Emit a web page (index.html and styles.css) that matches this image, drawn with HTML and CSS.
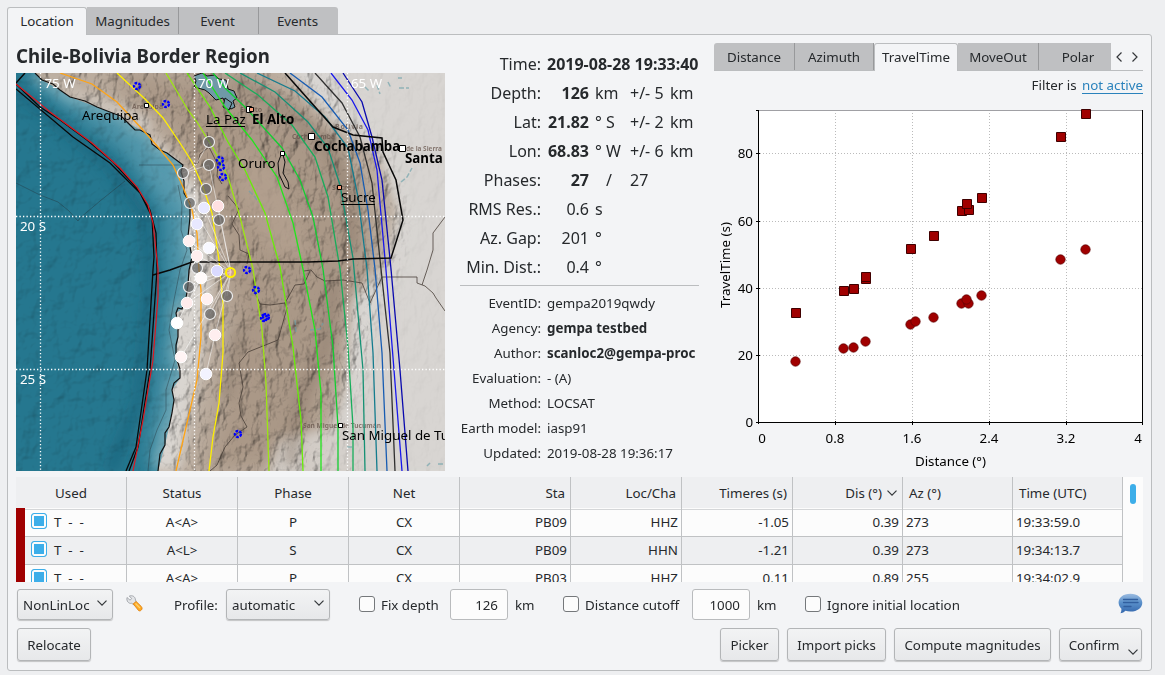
FILE: index.html
```html
<!DOCTYPE html>
<html lang="en">
<head>
<meta charset="utf-8">
<title>Origin locator</title>
<link rel="stylesheet" href="styles.css">
</head>
<body>
<main class="window">
<nav class="tabs main-tabs"><span class="tab t-location active">Location</span><span class="tab t-mag">Magnitudes</span><span class="tab t-event">Event</span><span class="tab t-events">Events</span></nav>
<section class="panel">
<div class="top">
<div class="map-col">
<h1 class="region">Chile-Bolivia Border Region</h1>
<svg class="map" viewBox="16 73 429 398">
<defs>
<filter id="relief" x="0" y="0" width="100%" height="100%">
<feTurbulence type="fractalNoise" baseFrequency="0.09 0.05" numOctaves="6" seed="8"/>
<feColorMatrix type="matrix" values="0 0 0 0 0  0 0 0 0 0  0 0 0 0 0  1 0 0 0 0"/>
<feDiffuseLighting surfaceScale="6" diffuseConstant="1.15" lighting-color="#fff"><feDistantLight azimuth="225" elevation="61"/></feDiffuseLighting>
</filter>
<filter id="seabed" x="0" y="0" width="100%" height="100%">
<feTurbulence type="fractalNoise" baseFrequency="0.06" numOctaves="3" seed="3"/>
<feColorMatrix type="matrix" values="0 0 0 0 0  0 0 0 0 0  0 0 0 0 0  1 0 0 0 0"/>
<feDiffuseLighting surfaceScale="4" diffuseConstant="1.15" lighting-color="#fff"><feDistantLight azimuth="225" elevation="60"/></feDiffuseLighting>
</filter>
<filter id="b6" x="-40%" y="-40%" width="180%" height="180%"><feGaussianBlur stdDeviation="6"/></filter>
<filter id="b12" x="-40%" y="-40%" width="180%" height="180%"><feGaussianBlur stdDeviation="11"/></filter>
<path id="coast" d="M35 73L42 80L53 84L60 90L70 97L85 101L97 107L115 114L121 116L127 122L135 130L140 130L144 132L150 135L152 144L160 150L167 153L183 165L181 172L184 181L184 193L190 203L190 217L188 237L192 257L189 270L188 285L186 298L182 309L178 308L176 313L178 325L178 337L176 345L176 357L180 369L180 378L174 383L172 390L174 400L172 413L169 427L165 433L165 445L160 454L158 471"/>
<clipPath id="land"><path d="M35 73L42 80L60 90L70 97L97 107L115 114L127 122L140 130L150 135L152 144L167 153L183 165L181 172L184 193L190 203L190 217L188 237L192 257L189 270L186 298L182 309L176 313L178 337L176 357L180 378L172 390L174 400L169 427L165 445L158 471H445V73Z"/></clipPath>
<g id="quake" fill="none" stroke="#00f"><circle r="3" stroke-width="2.4" stroke-dasharray="2.6 1.2"/></g>
</defs>
<rect x="16" y="73" width="429" height="398" fill="#25778f"/>
<path d="M35 73L97 107L150 140L186 170L192 257L178 320L165 445L155 471H148L155 400L170 280L168 215L125 150L25 75Z" fill="#5a9db1" filter="url(#b12)"/>
<use href="#coast" fill="none" stroke="#8ab8c3" stroke-width="9" filter="url(#b6)"/>
<path d="M16 90L110 165L145 215L150 280L140 400L110 471" fill="none" stroke="#175c75" stroke-width="12" opacity=".5" filter="url(#b6)"/>
<rect x="16" y="73" width="190" height="398" filter="url(#seabed)" class="shade sea"/>
<g clip-path="url(#land)">
<rect x="16" y="73" width="429" height="398" fill="#bbad9f"/>
<path d="M100 73H230L300 110L345 150L372 220L360 300L330 380L308 471H205L235 340L220 220L170 130Z" fill="#aa9887" filter="url(#b12)"/>
<path d="M30 73L150 133L200 190L214 255L203 350L180 471H150V120Z" fill="#d9d5d0" filter="url(#b6)"/>
<path d="M278 60H460V480H320L345 390L352 300L385 265L398 210L378 155L330 120Z" fill="#d8d5d2" filter="url(#b6)"/>
<path d="M280 440L315 430L365 430V480H265Z" fill="#d2ccc6" filter="url(#b6)"/>
<path d="M235 80L290 110L330 150L350 195L352 250M335 280L325 350L300 400L290 465M225 400L240 330" fill="none" stroke="#8b7a6c" stroke-width="12" opacity=".55" filter="url(#b6)"/>
<rect x="16" y="73" width="429" height="398" filter="url(#relief)" class="shade"/>
<path d="M240 145L280 175L310 255L265 250L237 190Z" fill="#b3a08f" opacity=".8" filter="url(#b6)"/>
<path d="M324 60H460V480H365L374 330L398 265L408 220L388 145L350 115Z" fill="#d8d5d2" opacity=".92" filter="url(#b6)"/>
<path d="M318 471L330 438L372 350L378 300L392 300V471Z" fill="#d6d2ce" opacity=".7" filter="url(#b6)"/>
</g>
<g fill="none" stroke="#24323a" stroke-width=".7" opacity=".6">
<path d="M16 183L40 195L58 202L69 211L78 221L80 218L100 201L125 181M139 165H183M178 185L182 205L181 230L187 250L180 270L174 300L169 330L175 360L166 390L166 410L157 430L150 450L148 471"/>
</g>
<g fill="none" stroke="#403730" stroke-width="1" opacity=".75">
<path d="M192 165L198 163L200 154L209 147L207 132M209 147L218 165L217 176L222 184M228 196L239 209L232 224L239 235L240 250L249 254L247 264M304 271L311 270L317 277L325 281L343 280L362 283L370 303L376 290L382 277H417V283L425 286L433 293L436 298L445 311M422 285L427 270L433 250V233L445 217M310 271L304 284L295 285L285 303L287 308L278 340L248 352L239 363L243 387L239 403L241 416L247 427L235 435L225 447L217 465L210 471M254 290L260 304L270 305L285 303"/>
</g>
<use href="#coast" fill="none" stroke="#111" stroke-width="1.2"/>
<g fill="#7099a7" stroke="#111" stroke-width="1">
<path d="M202 73L207 76L215 75L219 79L226 80L228 89L234 91L237 98L233 101L235 107L231 109L226 105L223 98L216 100L209 93L205 90L194 87L196 81L194 76Z"/>
<path d="M225 98L232 103L229 110L223 107Z"/><path d="M281 155L278 163L279 174L285 187L289 189L288 182L283 173L285 162L283 155Z" fill="#ad9b8b"/>
</g>
<g fill="none" stroke="#6ba1ab" stroke-width="1.5" opacity=".65"><path d="M249 191L255 197L258 202M295 320L296 333M310 330L320 329L323 323M365 87L370 92M377 85L380 94M388 82L391 88M399 88H409M398 78H402M427 466L430 463M438 464H444M401 182L407 177L412 168M347 447H352" stroke-dasharray="5 2"/></g>
<g font-family="Noto Sans" font-weight="700" font-size="7" fill="#66544b" opacity=".72">
<text x="132" y="109" textLength="31" lengthAdjust="spacingAndGlyphs">Arequipa</text><text x="240" y="112">El Alto</text><text x="292" y="139" textLength="43" lengthAdjust="spacingAndGlyphs">Cochabamba</text><text x="335" y="129" textLength="28">Bolivia</text><text x="406" y="151" textLength="36" lengthAdjust="spacingAndGlyphs">de la Sierra</text><text x="332" y="190">Sucre</text><text x="303" y="428" textLength="78" lengthAdjust="spacingAndGlyphs">San Miguel de Tucumán</text></g>
<g fill="none" stroke-width="1.3">
<path stroke="#ffa414" d="M60 73L92 84L117 102L143 130L158 147L173 165L183 187L192 210L197 233L199 270L201 290L201 337L197 380L187 423L176 471"/>
<path stroke="#fff000" d="M117 73L145 99L163 118L180 143L192 162L203 187L212 213L219 260L223 303L223 353L219 403L213 437L209 471"/>
<path stroke="#9be613" d="M166 73L188 110L197 122L213 148L228 177L240 217L253 269L262 330L266 383L269 471"/>
<path stroke="#68ee08" d="M187 73L210 107L228 142L245 170L265 213L280 267L293 347L301 420L303 471"/>
<path stroke="#20e61c" d="M203 73L225 107L252 140L277 177L293 223L303 269L315 330L321 393L321 471"/>
<path stroke="#13ce32" d="M213 73L225 88L245 107L282 148L300 180L313 217L323 269L333 347L338 427L338 471"/>
<path stroke="#17ad5b" d="M225 73L258 95L292 125L315 157L328 197L340 269L348 347L353 427V471"/>
<path stroke="#159174" d="M240 73L275 92L308 122L328 148L340 185L353 258L363 370L365 471"/>
<path stroke="#147c8e" d="M257 73L295 91L325 117L348 148L358 197L367 269L373 353L377 471"/>
<path stroke="#175cb2" d="M290 73L322 97L348 130L360 163L368 210L375 269L382 353L387 471"/>
<path stroke="#303030" d="M315 73L342 103L360 137L372 183L381 269L390 353L395 471"/>
<path stroke="#1717ed" d="M331 73L352 100L368 130L377 170L386 270L394 370L402 471"/>
<path stroke="#0909ae" d="M343 73L362 102L372 137L382 180L391 269L400 370L408 471"/>
</g>
<g fill="none" stroke="#080808" stroke-width="1.5">
<path d="M16 83L25 73M285 73L333 127L353 135L382 138L383 152L396 180L403 220L391 258L353 259L338 261L308 262H192L170 270L153 275"/>
<path d="M16 84L40 107L60 120L87 140L113 162L137 188L150 210L156 233L157 270L150 370L138 447L129 471M16 89L73 137L110 163L140 193L152 217L154 257L153 270L147 370L136 447L126 471" stroke-width="1.3"/>
</g>
<path d="M16 84L50 112L92 143L120 168L137 187L148 205L153 223L158 269V297L153 360L143 420L133 471" fill="none" stroke="#df1820" stroke-width="1.2"/>
<g stroke="#fff" stroke-opacity=".5" stroke-width="1" fill="none"><path d="M231 272L209 165L183 173L196 165L209 142M231 272L190 203M231 272L204 208M231 272L189 241M231 272L197 256M231 272L201 278L177 323M231 272L187 303M231 272L181 357M231 272L215 335L206 374M231 272L210 314M231 272L218 206M231 272L189 287M231 272L227 296"/></g>
<g stroke="#fff" stroke-width="1.3" stroke-dasharray="1.3 2.2" fill="none"><path d="M40.5 73V471M194.5 73V471M347.5 73V471M16 216.5H445M16 369.5H445"/></g>
<use href="#quake" x="137" y="86"/><use href="#quake" x="166" y="104"/><use href="#quake" x="220" y="160"/><use href="#quake" x="221" y="167"/><use href="#quake" x="223" y="177"/><use href="#quake" x="247" y="270"/><use href="#quake" x="256" y="290"/><use href="#quake" x="264" y="318"/><use href="#quake" x="266" y="317"/><use href="#quake" x="238" y="434"/>
<g fill="#606060" fill-opacity=".7" stroke="#eee" stroke-width="1.2"><circle cx="209" cy="142" r="5.5"/><circle cx="209" cy="165" r="5.5"/><circle cx="183" cy="173" r="5.5"/><circle cx="206" cy="189" r="5.5"/><circle cx="190" cy="203" r="5.5"/><circle cx="219" cy="220" r="5.5"/><circle cx="197" cy="268" r="5.5"/><circle cx="189" cy="287" r="5.5"/><circle cx="227" cy="296" r="5.5"/><circle cx="210" cy="314" r="5.5"/></g>
<g stroke="#fff"><circle cx="204" cy="208" r="5.8" fill="#e8e8ff"/><circle cx="218" cy="206" r="5.8" fill="#ffe0e2"/><circle cx="197" cy="224" r="5.8" fill="#e8e8ff"/><circle cx="189" cy="241" r="5.8" fill="#fff0f0"/><circle cx="209" cy="248" r="5.8" fill="#f8f8ff"/><circle cx="197" cy="256" r="5.8" fill="#ffeeee"/><circle cx="217" cy="271" r="5.8" fill="#dadaff"/><circle cx="201" cy="278" r="5.8" fill="#fffafa"/><circle cx="207" cy="299" r="5.8" fill="#fff0f0"/><circle cx="187" cy="303" r="5.8" fill="#ffecec"/><circle cx="177" cy="323" r="5.8" fill="#fff"/><circle cx="215" cy="335" r="5.8" fill="#ffeeef"/><circle cx="181" cy="357" r="5.8" fill="#fff4f4"/><circle cx="206" cy="374" r="5.8" fill="#f3f3ff"/></g>
<circle cx="230.500" cy="272.500" r="4.600" fill="#eda58a" fill-opacity=".5" stroke="#fff200" stroke-width="2"/>
<g stroke="#000" fill="#fff" stroke-width="1"><path d="M144.500 103.500h4v4h-4zM246.500 106.500h5v6h-5zM280.500 151.500h4v4h-4zM308.500 133.500h6v6h-6zM399.500 145.500h6v6h-6zM338.500 423.500h4v4h-4z"/><path fill="#ffa27e" d="M249.500 107.500h4v4h-4zM337.500 185.500h4v4h-4z"/></g>
<g class="geo-label" fill="#fff"><text x="44.500" y="88">75 W</text><text x="198" y="88">70 W</text><text x="351" y="88">65 W</text><text x="20" y="231">20 S</text><text x="20" y="384">25 S</text></g>
<g class="geo-label"><text x="82" y="120">Arequipa</text><text x="206" y="124">La Paz</text><text x="238" y="168">Oruro</text><text x="341" y="202">Sucre</text><text x="342" y="440">San Miguel de Tucuman</text><g font-weight="700"><text x="252" y="124">El Alto</text><text x="314" y="151">Cochabamba</text><text x="405" y="163">Santa</text></g><path d="M206 126.500H245M341 204.500H375" stroke="#000"/></g>
</svg>
</div>
<div class="info">
<dl class="summary">
<dt>Time:</dt><dd class="wide"><b>2019-08-28 19:33:40</b></dd>
<dt>Depth:</dt><dd class="num"><b>126</b></dd><dd>km</dd><dd>+/- 5</dd><dd>km</dd>
<dt>Lat:</dt><dd class="num"><b>21.82</b></dd><dd>° S</dd><dd>+/- 2</dd><dd>km</dd>
<dt>Lon:</dt><dd class="num"><b>68.83</b></dd><dd>° W</dd><dd>+/- 6</dd><dd>km</dd>
<dt>Phases:</dt><dd class="num"><b>27</b></dd><dd class="slash">/</dd><dd>27</dd><dd></dd>
<dt>RMS Res.:</dt><dd class="num">0.6</dd><dd>s</dd><dd></dd><dd></dd>
<dt>Az. Gap:</dt><dd class="num">201</dd><dd>°</dd><dd></dd><dd></dd>
<dt>Min. Dist.:</dt><dd class="num">0.4</dd><dd>°</dd><dd></dd><dd></dd>
</dl>
<hr class="rule">
<dl class="meta">
<dt>EventID:</dt><dd>gempa2019qwdy</dd>
<dt>Agency:</dt><dd><b>gempa testbed</b></dd>
<dt>Author:</dt><dd><b>scanloc2@gempa-proc</b></dd>
<dt>Evaluation:</dt><dd>- (A)</dd>
<dt>Method:</dt><dd>LOCSAT</dd>
<dt>Earth model:</dt><dd>iasp91</dd>
<dt>Updated:</dt><dd>2019-08-28 19:36:17</dd>
</dl>
</div>
<div class="plot-col">
<nav class="tabs plot-tabs"><span class="tab p1">Distance</span><span class="tab p2">Azimuth</span><span class="tab p3 active">TravelTime</span><span class="tab p4">MoveOut</span><span class="tab p5">Polar</span><svg class="arrows" viewBox="0 0 32 28"><path d="M10.500 9.500L6 14L10.500 18.500M21.500 9.500L26 14L21.500 18.500"/></svg></nav>
<p class="filter">Filter is <a class="link">not active</a></p>
<svg class="plot" viewBox="714 100 430 371">
<rect x="758" y="110" width="385" height="313" fill="#fff"/>
<path d="M835.500 113V422M912.500 113V422M989.500 113V422M1066.500 113V422M760 153.500H1142M760 221.500H1142M760 288.500H1142M760 355.500H1142" stroke="#bbb" stroke-dasharray="1 2" fill="none"/>
<path d="M759 110.500H1142" stroke="#a0a0a4"/>
<path d="M758.500 110V424M1142.500 110V425M756 422.500H1143M756 110.500H759M756 153.500H760M756 221.500H760M756 288.500H760M756 355.500H760M835.500 421V425M912.500 421V425M989.500 421V425M1066.500 421V425" stroke="#000" fill="none"/>
<g fill="#a00000" stroke="#400000">
<path d="M1081.500 109.500h9v9h-9z"/><path d="M1056.500 132.500h9v9h-9z"/><path d="M977.500 193.500h9v9h-9z"/><path d="M957.500 206.500h9v9h-9z"/><path d="M964.500 205.500h9v9h-9z"/><path d="M962.500 199.500h9v9h-9z"/><path d="M929.500 231.500h9v9h-9z"/><path d="M906.500 244.500h9v9h-9z"/><path d="M861.500 274.500h9v9h-9z"/><path d="M861.500 272.500h9v9h-9z"/><path d="M849.500 284.500h9v9h-9z"/><path d="M839.500 286.500h9v9h-9z"/><path d="M791.500 308.500h9v9h-9z"/>
</g>
<g fill="#a00000" stroke="#5a0000" stroke-width=".7"><circle cx="1060.500" cy="259.500" r="4.700"/><circle cx="1085.500" cy="249.500" r="4.700"/><circle cx="981.500" cy="295.500" r="4.700"/><circle cx="961.500" cy="303.500" r="4.700"/><circle cx="968.500" cy="303.500" r="4.700"/><circle cx="966.500" cy="299.500" r="4.700"/><circle cx="933.500" cy="317.500" r="4.700"/><circle cx="910.500" cy="324.500" r="4.700"/><circle cx="915.500" cy="321.500" r="4.700"/><circle cx="865.500" cy="341.500" r="4.700"/><circle cx="853.500" cy="347.500" r="4.700"/><circle cx="843.500" cy="348.500" r="4.700"/><circle cx="795.500" cy="361.500" r="4.700"/></g>
<g class="axis"><g text-anchor="end"><text x="753" y="158">80</text><text x="753" y="226">60</text><text x="753" y="293">40</text><text x="753" y="360">20</text><text x="753" y="427">0</text></g><g text-anchor="middle"><text x="762" y="443">0</text><text x="835" y="443">0.8</text><text x="912" y="443">1.6</text><text x="989" y="443">2.4</text><text x="1066" y="443">3.2</text><text x="1138" y="443">4</text><text x="950.500" y="466">Distance (°)</text><text transform="translate(729.500 265) rotate(-90)">TravelTime (s)</text></g></g>
</svg>
</div>
</div>
<div class="table">
<div class="row head"><span class="c">Used</span><span class="c">Status</span><span class="c">Phase</span><span class="c">Net</span><span class="r">Sta</span><span class="r">Loc/Cha</span><span class="r">Timeres (s)</span><span class="r sort">Dis (°)<svg class="chev" viewBox="0 0 10 6"><path d="M.5 .7L5 5.200L9.500 .7"/></svg></span><span>Az (°)</span><span>Time (UTC)</span></div>
<div class="row"><span class="used"><i class="check on"></i>T&nbsp; -&nbsp; -</span><span class="c">A&lt;A&gt;</span><span class="c">P</span><span class="c">CX</span><span class="r">PB09</span><span class="r">HHZ</span><span class="r">-1.05</span><span class="r">0.39</span><span>273</span><span>19:33:59.0</span></div>
<div class="row alt"><span class="used"><i class="check on"></i>T&nbsp; -&nbsp; -</span><span class="c">A&lt;L&gt;</span><span class="c">S</span><span class="c">CX</span><span class="r">PB09</span><span class="r">HHN</span><span class="r">-1.21</span><span class="r">0.39</span><span>273</span><span>19:34:13.7</span></div>
<div class="row"><span class="used"><i class="check on"></i>T&nbsp; -&nbsp; -</span><span class="c">A&lt;A&gt;</span><span class="c">P</span><span class="c">CX</span><span class="r">PB03</span><span class="r">HHZ</span><span class="r">0.11</span><span class="r">0.89</span><span>255</span><span>19:34:02.9</span></div>
<i class="scroll"></i>
</div>
<div class="controls">
<span class="btn combo locator">NonLinLoc<svg class="chev" viewBox="0 0 10 6"><path d="M.5 .7L5 5.200L9.500 .7"/></svg></span>
<svg class="wrench" viewBox="0 0 17 17"><path d="M1 2.500L4 5.200L5.700 3.600L3.300 1C6 .1 9.200 1.200 9.500 5L10.500 8L8 10L5.600 8.300C2.700 9 .2 6 1 2.500Z" fill="#e3e5e8" stroke="#9599a0" stroke-width=".8"/><path d="M7.200 8.800L10.200 6.500L15.300 11.500C17.500 14 14.300 17 12.500 15.500Z" fill="#ffab25" stroke="#db7b0b" stroke-width=".8"/><path d="M9.500 8.500L14 13" stroke="#ffd36e" stroke-width="1.200"/></svg>
<span class="profile">Profile:</span>
<span class="btn combo auto">automatic<svg class="chev" viewBox="0 0 10 6"><path d="M.5 .7L5 5.200L9.500 .7"/></svg></span>
<label class="opt depth"><i class="check"></i>Fix depth</label><span class="field">126</span><span class="unit">km</span>
<label class="opt cutoff"><i class="check"></i>Distance cutoff</label><span class="field">1000</span><span class="unit">km</span>
<label class="opt ignore"><i class="check"></i>Ignore initial location</label>
<svg class="comment" viewBox="0 0 25 21"><defs><linearGradient id="bubble" x2="0" y2="1"><stop stop-color="#9bbbe0"/><stop offset=".45" stop-color="#5b91cb"/><stop offset="1" stop-color="#3467ad"/></linearGradient></defs><path d="M12.500 .7C19.500 .7 24.300 4.700 24.300 9.700C24.300 14.700 19.500 18.500 12.500 18.500Q9.500 18.500 7.500 17.800Q5.500 20 2.500 20.200Q3.600 18 3.400 15.700C-2.500 10 1 .7 12.500 .7Z" fill="url(#bubble)"/><path d="M5.500 6.500H19.500M5.500 9.500H20M6 13.500H13" stroke="#315f9f" stroke-width="1.300" stroke-linecap="round"/></svg>
</div>
<div class="actions"><span class="btn b-reloc">Relocate</span><span class="btn b-picker">Picker</span><span class="btn b-import">Import picks</span><span class="btn b-mag">Compute magnitudes</span><span class="btn b-confirm">Confirm<svg class="chev" viewBox="0 0 10 6"><path d="M.5 .7L5 5.200L9.500 .7"/></svg></span></div>
</section>
</main>
</body>
</html>
```
FILE: styles.css
```css
* { box-sizing: border-box; }
body { margin: 0; background: #eeeff1; color: #26292c; font: 13.33px/18px "Noto Sans", sans-serif; }
.window { width: 1165px; height: 675px; padding: 7px 13px 4px 7px; display: flex; flex-direction: column; overflow: hidden; }
.tabs { display: flex; height: 28px; position: relative; z-index: 1; flex: none; }
.main-tabs { margin-bottom: -1px; }
.tab { display: flex; align-items: center; justify-content: center; height: 27px; background: #bfc0c2; border-right: 1px solid #98999b; }
.tab:last-of-type { border-right: 0; border-radius: 0 3px 0 0; }
.tab.active { height: 28px; background: #f3f4f6; border: 1px solid #bbbdbf; border-bottom: 0; border-radius: 3px 3px 0 0; padding-bottom: 2px; }
.t-location { width: 80px; }
.t-mag { width: 92px; }
.t-event { width: 80px; padding-right: 2px; }
.t-events { width: 79px; padding-right: 2px; }
.panel { flex: 1; border: 1px solid #bbbdbf; border-radius: 0 3px 3px 3px; background: #f3f4f6; padding: 8px 8px 0; }
.top { display: flex; gap: 15px; height: 428px; }
.map-col { width: 429px; }
.region { margin: 0; height: 30px; font-size: 18.67px; line-height: 26px; font-weight: 700; white-space: nowrap; letter-spacing: .05px; }
.map { display: block; width: 429px; height: 398px; }
.shade { mix-blend-mode: multiply; opacity: .8; }
.sea { opacity: .55; }
.geo-label { font: 13.33px "Noto Sans", sans-serif; }
.info { width: 239px; padding-top: 7px; }
.summary, .meta { margin: 0; display: grid; white-space: nowrap; }
.summary { grid-template-columns: 81px 42px 29px 34px 29px; column-gap: 6px; grid-auto-rows: 29px; font-size: 16px; line-height: 29px; }
.summary dt, .meta dt { text-align: right; }
.summary dd, .meta dd { margin: 0; }
.summary .wide { grid-column: 2 / -1; }
.summary .num { text-align: right; }
.summary .slash { padding-left: 11px; }
.rule { height: 1px; margin: 3px 0 5px; border: 0; background: #bbbdbf; }
.meta { grid-template-columns: 81px 1fr; column-gap: 6px; grid-auto-rows: 25px; line-height: 25px; }
.plot-col { width: 429px; }
.plot-tabs { border-bottom: 1px solid #bbbdbf; }
.p1 { width: 81px; border-radius: 3px 0 0 0; }
.p2 { width: 79px; }
.p3 { width: 84px; }
.p4 { width: 81px; }
.plot-tabs .p5 { width: 72px; padding-left: 6px; border-radius: 0; }
.arrows { width: 32px; height: 28px; }
.arrows path, .chev path { fill: none; stroke: #34373a; stroke-width: 1.2; }
.filter { margin: 0; height: 29px; line-height: 29px; text-align: right; }
.link { color: #2a82bc; margin-left: 2px; text-decoration: underline; text-underline-offset: 3px; }
.plot { display: block; width: 430px; height: 371px; }
.axis { font: 13.33px "Noto Sans", sans-serif; fill: #000; }
.table { width: 1127px; height: 105px; margin-top: 6px; overflow: hidden; background: #fcfcfc; position: relative; }
.row { display: grid; grid-template-columns: repeat(7, 111px) repeat(3, 110px); width: 1107px; height: 28px; line-height: 28px; background: #fcfcfc; }
.row > span { border-right: 1px solid #c0c2c4; border-bottom: 1px solid #c0c2c4; padding: 0 3px; white-space: nowrap; }
.row .c { text-align: center; }
.row .r { text-align: right; }
.row.alt, .row.head { background: #eeeff1; }
.row.head { height: 31px; line-height: 32px; }
.row.head > span { padding: 0 6px 0 6px; border-bottom-color: #d4d6d8; }
.row.head .r { padding-right: 5px; }
.row .used { display: flex; align-items: center; background: linear-gradient(90deg, #a00000 9px, transparent 9px) padding-box; padding-left: 15px; }
.check { width: 16px; height: 16px; border: 1px solid #75787b; border-radius: 3px; background: #fcfcfc; flex: none; display: block; }
.check.on { border-color: #3daee9; background: #3daee9; box-shadow: inset 0 0 0 2px #fcfcfc; margin: 0 7px 2px 0; }
.chev { width: 10px; height: 6px; flex: none; overflow: visible; }
.sort .chev { margin: 0 0 2px 5px; }
.scroll { position: absolute; right: 7px; top: 7px; width: 6px; height: 20px; border-radius: 3px; background: #3daee9; }
.controls { display: flex; align-items: center; height: 31px; margin: 7px 0 8px 1px; white-space: nowrap; }
.btn { display: flex; align-items: center; justify-content: center; border: 1px solid #b3b5b7; border-radius: 3px; background: linear-gradient(#f2f3f4, #e7e8ea); box-shadow: 0 1px 1px #0003; }
.combo { height: 31px; justify-content: space-between; padding: 0 5px; }
.combo .chev { margin-bottom: 3px; }
.locator { width: 96px; }
.wrench { width: 17px; height: 17px; margin: 0 31px 2px 13px; }
.profile { width: 52px; }
.auto { width: 104px; }
.opt { display: flex; align-items: center; gap: 6px; }
.opt .check { margin-bottom: 1px; }
.depth { margin-left: 29px; width: 91px; }
.cutoff { width: 129px; }
.ignore { width: 200px; }
.field { width: 58px; height: 31px; line-height: 31px; border: 1px solid #b9bbbd; border-radius: 3px; background: #fcfcfc; text-align: right; padding-right: 9px; }
.unit { width: 48px; margin: 0 0 0 7px; }
.comment { width: 25px; height: 21px; margin: 0 0 2px auto; }
.actions { display: flex; gap: 8px; height: 33px; margin: 0 1px; white-space: nowrap; }
.actions .btn { height: 33px; }
.b-reloc { width: 74px; margin-right: auto; }
.b-picker { width: 59px; }
.b-import { width: 99px; }
.b-mag { width: 157px; }
.b-confirm { width: 83px; gap: 9px; padding-left: 6px; }
.b-confirm .chev { margin-top: 14px; }
```
